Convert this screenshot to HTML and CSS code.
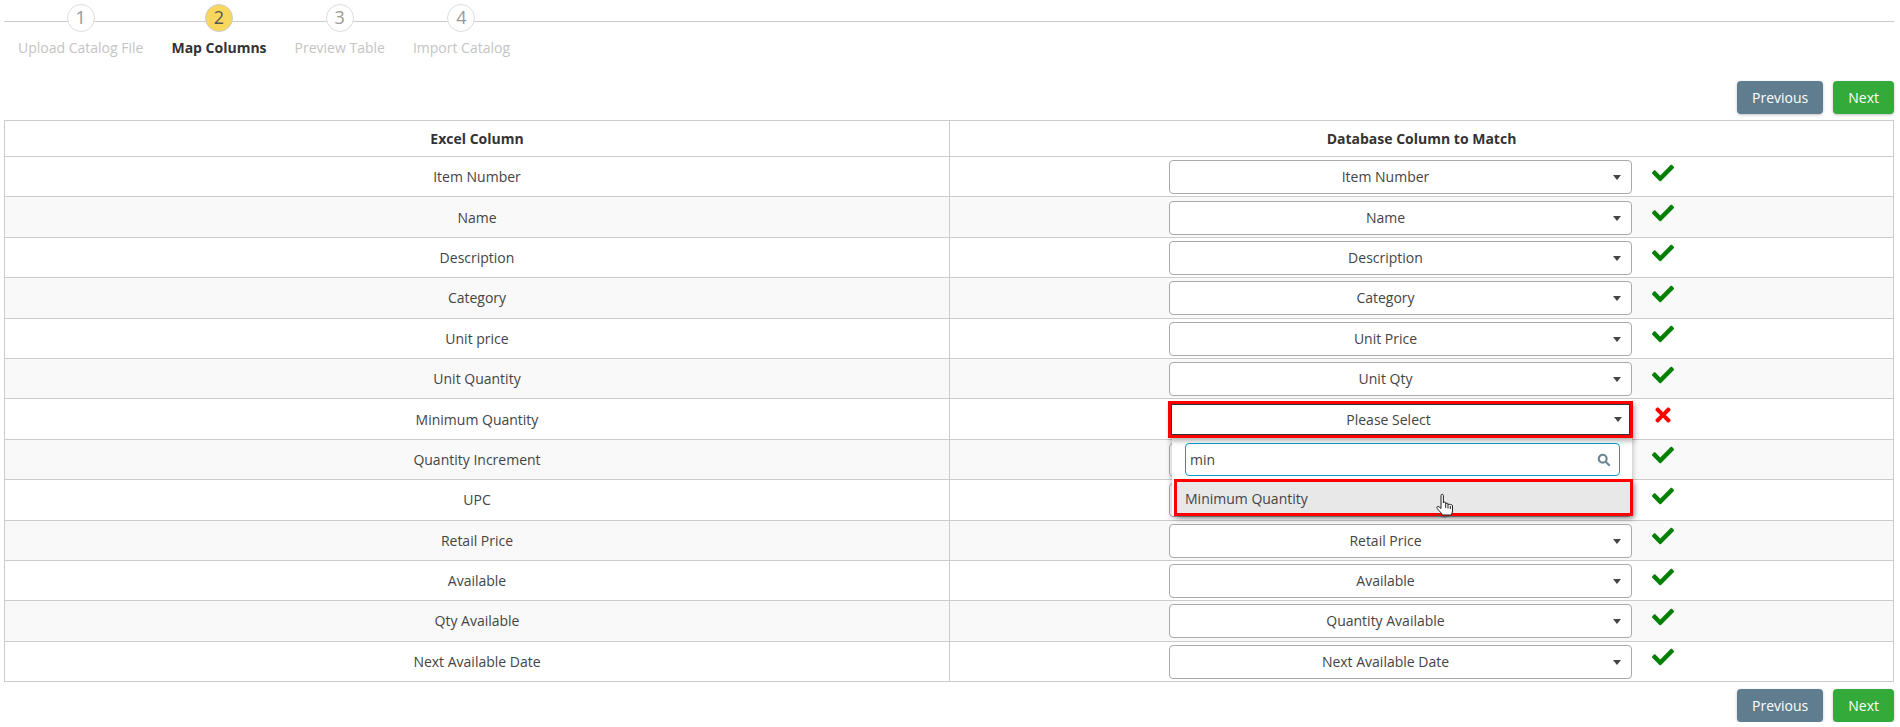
FILE: index.html
```html
<!DOCTYPE html>
<html lang="en">
<head>
    <meta charset="UTF-8">
    <meta name="viewport" content="width=device-width, initial-scale=1.0">
    <title>Import Catalog</title>
    <link rel="stylesheet" href="styles.css">
</head>
<body>

    <svg class="icon-defs" aria-hidden="true">
        <symbol id="check" viewBox="0 0 512 512"><path d="M173.898 439.404l-166.4-166.4c-9.997-9.997-9.997-26.206 0-36.204l36.203-36.204c9.997-9.998 26.207-9.998 36.204 0L192 312.69 432.095 72.596c9.997-9.997 26.207-9.997 36.204 0l36.203 36.204c9.997 9.997 9.997 26.206 0 36.204l-294.4 294.401c-9.998 9.997-26.207 9.997-36.204-.001z"/></symbol>
        <symbol id="times" viewBox="0 0 352 512"><path d="M242.72 256l100.07-100.07c12.28-12.28 12.28-32.19 0-44.48l-22.24-22.24c-12.28-12.28-32.19-12.28-44.48 0L176 189.28 75.93 89.21c-12.28-12.28-32.19-12.28-44.48 0L9.21 111.45c-12.28 12.28-12.28 32.19 0 44.48L109.28 256 9.21 356.07c-12.28 12.28-12.28 32.19 0 44.48l22.24 22.24c12.28 12.28 32.2 12.28 44.48 0L176 322.72l100.07 100.07c12.28 12.28 32.2 12.28 44.48 0l22.24-22.24c12.28-12.28 12.28-32.19 0-44.48L242.72 256z"/></symbol>
    </svg>

    <div class="stepper">
        <div class="step"><span class="step-num">1</span><span class="step-label">Upload Catalog File</span></div>
        <div class="step active"><span class="step-num">2</span><span class="step-label">Map Columns</span></div>
        <div class="step"><span class="step-num">3</span><span class="step-label">Preview Table</span></div>
        <div class="step"><span class="step-num">4</span><span class="step-label">Import Catalog</span></div>
    </div>

    <div class="actions actions-top">
        <button class="btn btn-prev">Previous</button>
        <button class="btn btn-next">Next</button>
    </div>

    <table class="map-table">
        <thead>
            <tr><th class="col-excel">Excel Column</th><th>Database Column to Match</th></tr>
        </thead>
        <tbody>
            <tr><td>Item Number</td><td><div class="match"><div class="select">Item Number</div><svg class="icon-ok"><use href="#check"/></svg></div></td></tr>
            <tr><td>Name</td><td><div class="match"><div class="select">Name</div><svg class="icon-ok"><use href="#check"/></svg></div></td></tr>
            <tr><td>Description</td><td><div class="match"><div class="select">Description</div><svg class="icon-ok"><use href="#check"/></svg></div></td></tr>
            <tr><td>Category</td><td><div class="match"><div class="select">Category</div><svg class="icon-ok"><use href="#check"/></svg></div></td></tr>
            <tr><td>Unit price</td><td><div class="match"><div class="select">Unit Price</div><svg class="icon-ok"><use href="#check"/></svg></div></td></tr>
            <tr><td>Unit Quantity</td><td><div class="match"><div class="select">Unit Qty</div><svg class="icon-ok"><use href="#check"/></svg></div></td></tr>
            <tr>
                <td>Minimum Quantity</td>
                <td>
                    <div class="match">
                        <div class="select-wrap">
                            <div class="select select-open">Please Select</div>
                            <div class="dropdown">
                                <div class="search-box">
                                    <span class="search-text">min</span>
                                    <svg class="icon-search" viewBox="0 0 16 16"><circle cx="6.5" cy="6.5" r="4.5"/><line x1="10" y1="10" x2="14.5" y2="14.5"/></svg>
                                </div>
                                <div class="option">Minimum Quantity
                                    <svg class="hand" viewBox="0 0 20 26">
                                        <path class="hand-ring" d="M3 21a7 5 0 0 0 13 0"/>
                                        <path class="hand-body" d="M6 2.500c0-1.600 2.400-1.600 2.400 0V10c0-1.200 2.300-1.200 2.300 0v1c0-1.200 2.300-1.200 2.300 0v1c0-1.200 2.300-1.200 2.300 0 0-.6 2.200-.6 2.200.8V18c0 1.800-.8 2.600-1.200 4H7.400C6.600 20 4.600 18.500 2.200 15.500c-1-1.400.6-2.700 1.800-1.700L6 15.500z"/>
                                        <path class="hand-body" d="M10.700 11v4M13 12v3.500M15.300 13v3"/>
                                    </svg>
                                </div>
                            </div>
                        </div>
                        <svg class="icon-bad"><use href="#times"/></svg>
                    </div>
                </td>
            </tr>
            <tr><td>Quantity Increment</td><td><div class="match"><div class="select"></div><svg class="icon-ok"><use href="#check"/></svg></div></td></tr>
            <tr><td>UPC</td><td><div class="match"><div class="select"></div><svg class="icon-ok"><use href="#check"/></svg></div></td></tr>
            <tr><td>Retail Price</td><td><div class="match"><div class="select">Retail Price</div><svg class="icon-ok"><use href="#check"/></svg></div></td></tr>
            <tr><td>Available</td><td><div class="match"><div class="select">Available</div><svg class="icon-ok"><use href="#check"/></svg></div></td></tr>
            <tr><td>Qty Available</td><td><div class="match"><div class="select">Quantity Available</div><svg class="icon-ok"><use href="#check"/></svg></div></td></tr>
            <tr><td>Next Available Date</td><td><div class="match"><div class="select">Next Available Date</div><svg class="icon-ok"><use href="#check"/></svg></div></td></tr>
        </tbody>
    </table>

    <div class="actions actions-bottom">
        <button class="btn btn-prev">Previous</button>
        <button class="btn btn-next">Next</button>
    </div>

</body>
</html>
```

FILE: styles.css
```css
body {
    margin: 0;
    padding: 0 6px 0 4px;
    font-family: "Open Sans", sans-serif;
    font-size: 14px;
    color: #444;
    background: #fff;
}
.icon-defs {
    display: none;
}

/* stepper */
.stepper {
    position: relative;
    display: flex;
    padding-top: 4px;
}
.stepper::before {
    content: "";
    position: absolute;
    left: 0;
    right: 0;
    top: 21px;
    border-top: 1px solid #ccc;
}
.step {
    position: relative;
    display: flex;
    flex-direction: column;
    align-items: center;
    padding: 0 14px;
}
.step-num {
    width: 28px;
    height: 28px;
    box-sizing: border-box;
    border: 1px solid #ddd;
    border-radius: 50%;
    background: #fff;
    color: #999;
    font-size: 18px;
    line-height: 25px;
    text-align: center;
}
.step-label {
    margin-top: 6px;
    line-height: 20px;
    color: #c4c4c4;
}
.step.active .step-num {
    background: #f8d75e;
    border-color: #ccc;
    color: #555;
}
.step.active .step-label {
    color: #333;
    font-weight: 700;
}

/* buttons */
.actions {
    display: flex;
    justify-content: flex-end;
    gap: 10px;
}
.actions-top {
    margin-top: 23px;
    margin-bottom: 6px;
}
.actions-bottom {
    margin-top: 7px;
}
.btn {
    height: 33px;
    padding: 0 15px;
    border: none;
    border-radius: 4px;
    color: #fff;
    font-family: inherit;
    font-size: 14px;
    cursor: pointer;
    box-shadow: 0 1px 3px rgba(0, 0, 0, 0.25);
}
.btn-prev {
    background-color: #607d8f;
}
.btn-next {
    background-color: #33aa3a;
}

/* table */
.map-table {
    width: 100%;
    border-collapse: collapse;
    table-layout: fixed;
    border: 1px solid #ccc;
}
.map-table th,
.map-table td {
    border: 1px solid #ccc;
    text-align: center;
    padding: 0;
}
.map-table th {
    height: 35px;
    color: #333;
    font-weight: 700;
}
.col-excel {
    width: 944px;
}
.map-table td {
    height: 39.4px;
}
.map-table tbody tr:nth-child(even) {
    background-color: #f9f9f9;
}

/* select boxes */
.match {
    display: flex;
    justify-content: center;
    align-items: center;
    gap: 20px;
    padding-top: 1px;
}
.select,
.select-wrap {
    width: 463px;
    flex: none;
}
.select-wrap {
    position: relative;
    height: 34px;
}
.select {
    position: relative;
    height: 34px;
    box-sizing: border-box;
    padding: 0 42px 0 12px;
    border: 1px solid #aaa;
    border-radius: 4px;
    background: #fff;
    line-height: 32px;
    text-align: center;
}
.select::after {
    content: "";
    position: absolute;
    right: 10px;
    top: 14px;
    border-left: 4.5px solid transparent;
    border-right: 4.5px solid transparent;
    border-top: 5px solid #444;
}
/* the red boxes are drawn just over the control, as on an annotated screenshot */
.select-open {
    width: auto;
    height: 31px;
    margin: 1px 2px 0;
    padding-right: 36px;
    border-color: #333;
    border-radius: 0;
    line-height: 29px;
    outline: 3px solid #f00;
    box-shadow: 2px 3px 5px 3px rgba(0, 0, 0, 0.3);
    z-index: 3;
}
.select-open::after {
    right: 7px;
    top: 12px;
}

/* open dropdown */
.dropdown {
    position: absolute;
    z-index: 2;
    left: 3px;
    right: 0;
    top: 34px;
    height: 79px;
    background: #fff;
    text-align: left;
    box-shadow: 0 2px 6px rgba(0, 0, 0, 0.3);
}
.search-box {
    position: absolute;
    left: 13px;
    right: 12px;
    top: 6px;
    height: 33px;
    box-sizing: border-box;
    border: 1px solid #0d9ccc;
    border-radius: 4px;
    padding-left: 4px;
    line-height: 31px;
}
.search-text {
    font-size: 14px;
}
.icon-search {
    position: absolute;
    right: 8px;
    top: 9px;
    width: 14px;
    height: 14px;
    fill: none;
    stroke: #6b8594;
    stroke-width: 2.4;
}
.option {
    position: absolute;
    left: 5px;
    right: 2px;
    top: 45px;
    height: 31px;
    padding-left: 8px;
    background: #e8e8e8;
    line-height: 34px;
    outline: 3px solid #f00;
    box-shadow: 3px 3px 5px 2px rgba(0, 0, 0, 0.3);
}
.hand {
    position: absolute;
    left: 258px;
    top: 11px;
    width: 20px;
    height: 26px;
    overflow: visible;
}
.hand-body {
    fill: #fff;
    stroke: #222;
    stroke-width: 1;
}
.hand-ring {
    fill: none;
    stroke: #555;
    stroke-width: 1;
}

/* status icons */
.icon-ok,
.icon-bad {
    width: 22px;
    height: 22px;
    margin-bottom: 9px;
    flex: none;
}
.icon-ok {
    fill: #008000;
}
.icon-bad {
    fill: #f00;
}
```
